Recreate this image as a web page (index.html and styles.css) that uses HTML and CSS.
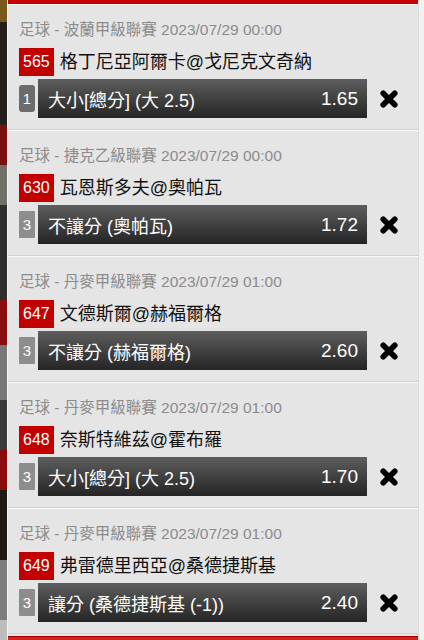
FILE: index.html
```html
<!DOCTYPE html>
<html lang="zh-Hant">
<head>
    <meta charset="UTF-8">
    <meta name="viewport" content="width=device-width, initial-scale=1.0">
    <title>投注單</title>
    <link rel="stylesheet" href="styles.css">
</head>
<body>
    <div class="page">
        <div class="strip-left"></div>
        <div class="panel">
            <div class="top-bar"></div>

            <div class="bet-card">
                <div class="league">足球 - 波蘭甲級聯賽 2023/07/29 00:00</div>
                <div class="match">
                    <span class="match-no">565</span>
                    <span class="match-name">格丁尼亞阿爾卡@戈尼克文奇納</span>
                </div>
                <div class="bet-row">
                    <span class="bet-idx bet-idx-first">1</span>
                    <div class="bet-bar">
                        <span class="bet-type">大小[總分] (大 2.5)</span>
                        <span class="bet-odds">1.65</span>
                    </div>
                    <span class="bet-del">
                        <svg width="18" height="18" viewBox="0 0 18 18"><path d="M3.2 3.2L14.8 14.8M14.8 3.2L3.2 14.8" stroke="#000" stroke-width="5.6" stroke-linecap="round"/></svg>
                    </span>
                </div>
            </div>

            <div class="bet-card">
                <div class="league">足球 - 捷克乙級聯賽 2023/07/29 00:00</div>
                <div class="match">
                    <span class="match-no">630</span>
                    <span class="match-name">瓦恩斯多夫@奧帕瓦</span>
                </div>
                <div class="bet-row">
                    <span class="bet-idx">3</span>
                    <div class="bet-bar">
                        <span class="bet-type">不讓分 (奧帕瓦)</span>
                        <span class="bet-odds">1.72</span>
                    </div>
                    <span class="bet-del">
                        <svg width="18" height="18" viewBox="0 0 18 18"><path d="M3.2 3.2L14.8 14.8M14.8 3.2L3.2 14.8" stroke="#000" stroke-width="5.6" stroke-linecap="round"/></svg>
                    </span>
                </div>
            </div>

            <div class="bet-card">
                <div class="league">足球 - 丹麥甲級聯賽 2023/07/29 01:00</div>
                <div class="match">
                    <span class="match-no">647</span>
                    <span class="match-name">文德斯爾@赫福爾格</span>
                </div>
                <div class="bet-row">
                    <span class="bet-idx">3</span>
                    <div class="bet-bar">
                        <span class="bet-type">不讓分 (赫福爾格)</span>
                        <span class="bet-odds">2.60</span>
                    </div>
                    <span class="bet-del">
                        <svg width="18" height="18" viewBox="0 0 18 18"><path d="M3.2 3.2L14.8 14.8M14.8 3.2L3.2 14.8" stroke="#000" stroke-width="5.6" stroke-linecap="round"/></svg>
                    </span>
                </div>
            </div>

            <div class="bet-card">
                <div class="league">足球 - 丹麥甲級聯賽 2023/07/29 01:00</div>
                <div class="match">
                    <span class="match-no">648</span>
                    <span class="match-name">奈斯特維茲@霍布羅</span>
                </div>
                <div class="bet-row">
                    <span class="bet-idx">3</span>
                    <div class="bet-bar">
                        <span class="bet-type">大小[總分] (大 2.5)</span>
                        <span class="bet-odds">1.70</span>
                    </div>
                    <span class="bet-del">
                        <svg width="18" height="18" viewBox="0 0 18 18"><path d="M3.2 3.2L14.8 14.8M14.8 3.2L3.2 14.8" stroke="#000" stroke-width="5.6" stroke-linecap="round"/></svg>
                    </span>
                </div>
            </div>

            <div class="bet-card">
                <div class="league">足球 - 丹麥甲級聯賽 2023/07/29 01:00</div>
                <div class="match">
                    <span class="match-no">649</span>
                    <span class="match-name">弗雷德里西亞@桑德捷斯基</span>
                </div>
                <div class="bet-row">
                    <span class="bet-idx">3</span>
                    <div class="bet-bar">
                        <span class="bet-type">讓分 (桑德捷斯基 (-1))</span>
                        <span class="bet-odds">2.40</span>
                    </div>
                    <span class="bet-del">
                        <svg width="18" height="18" viewBox="0 0 18 18"><path d="M3.2 3.2L14.8 14.8M14.8 3.2L3.2 14.8" stroke="#000" stroke-width="5.6" stroke-linecap="round"/></svg>
                    </span>
                </div>
            </div>

            <div class="foot-bar"></div>
        </div>
        <div class="strip-right"></div>
    </div>
</body>
</html>
```
FILE: styles.css
```css
*{
    margin: 0;
    padding: 0;
    box-sizing: border-box;
}
body{
    font-family: "Liberation Sans", "Noto Sans CJK TC", sans-serif;
    background: #efefef;
}
.page{
    display: flex;
    width: 424px;
    height: 640px;
    overflow: hidden;
}
/* page behind the popup */
.strip-left{
    width: 7px;
    flex: none;
    background: linear-gradient(
        #7a5a1c 0, #7a5a1c 22px,
        #231f1c 22px, #231f1c 125px,
        #7b1010 125px, #7b1010 165px,
        #6f7066 165px, #6f7066 205px,
        #2e2e2e 205px, #2e2e2e 300px,
        #8a0f0f 300px, #8a0f0f 345px,
        #777 345px, #777 400px,
        #3a3a3a 400px, #3a3a3a 450px,
        #8b0c0c 450px, #8b0c0c 490px,
        #1f1a18 490px, #1f1a18 560px,
        #7d7d7d 560px, #7d7d7d 620px,
        #bdbdbd 620px
    );
}
.strip-right{
    width: 6px;
    flex: none;
    background: #f1f1f1;
    border-left: 1px solid #dcdcdc;
}
.panel{
    flex: 1;
    background: #e5e5e6;
    border-left: 1px solid #f4f4f4;
}
.top-bar{
    height: 4px;
    background: #c80000;
}
.bet-card{
    padding: 15px 0 11px 11px;
    border-top: 1px solid #fafafa;
    border-bottom: 1px solid #d0d0d0;
}
.league{
    height: 20px;
    line-height: 20px;
    font-size: 15.5px;
    color: #8c8c8c;
}
.match{
    display: flex;
    align-items: center;
    gap: 6px;
    margin-top: 8px;
    height: 28px;
}
.match-no{
    height: 28px;
    line-height: 28px;
    padding: 0 4px;
    background: #c20000;
    color: #fff;
    font-size: 16px;
}
.match-name{
    font-size: 18px;
    line-height: 24px;
    color: #111;
}
.bet-row{
    display: flex;
    align-items: center;
    margin-top: 3px;
    height: 39px;
}
.bet-idx{
    width: 16px;
    height: 27px;
    line-height: 27px;
    text-align: center;
    background: #8d8d8d;
    color: #fff;
    font-size: 15px;
    border-radius: 1px;
    flex: none;
}
.bet-idx-first{
    background: #6c6c6c;
    border-radius: 3px;
}
.bet-bar{
    flex: 1;
    height: 39px;
    margin-left: 3px;
    display: flex;
    align-items: center;
    justify-content: space-between;
    padding: 0 9px 0 10px;
    background: linear-gradient(#5e5e5e, #242424);
    color: #fff;
}
.bet-type{
    font-size: 18px;
}
.bet-odds{
    font-size: 19px;
}
.bet-del{
    width: 44px;
    flex: none;
    display: flex;
    justify-content: center;
    margin-right: 7px;
}
.foot-bar{
    height: 12px;
    margin-top: 2px;
    background: #d42020;
    border-top: 1px solid #9a0000;
}
```
